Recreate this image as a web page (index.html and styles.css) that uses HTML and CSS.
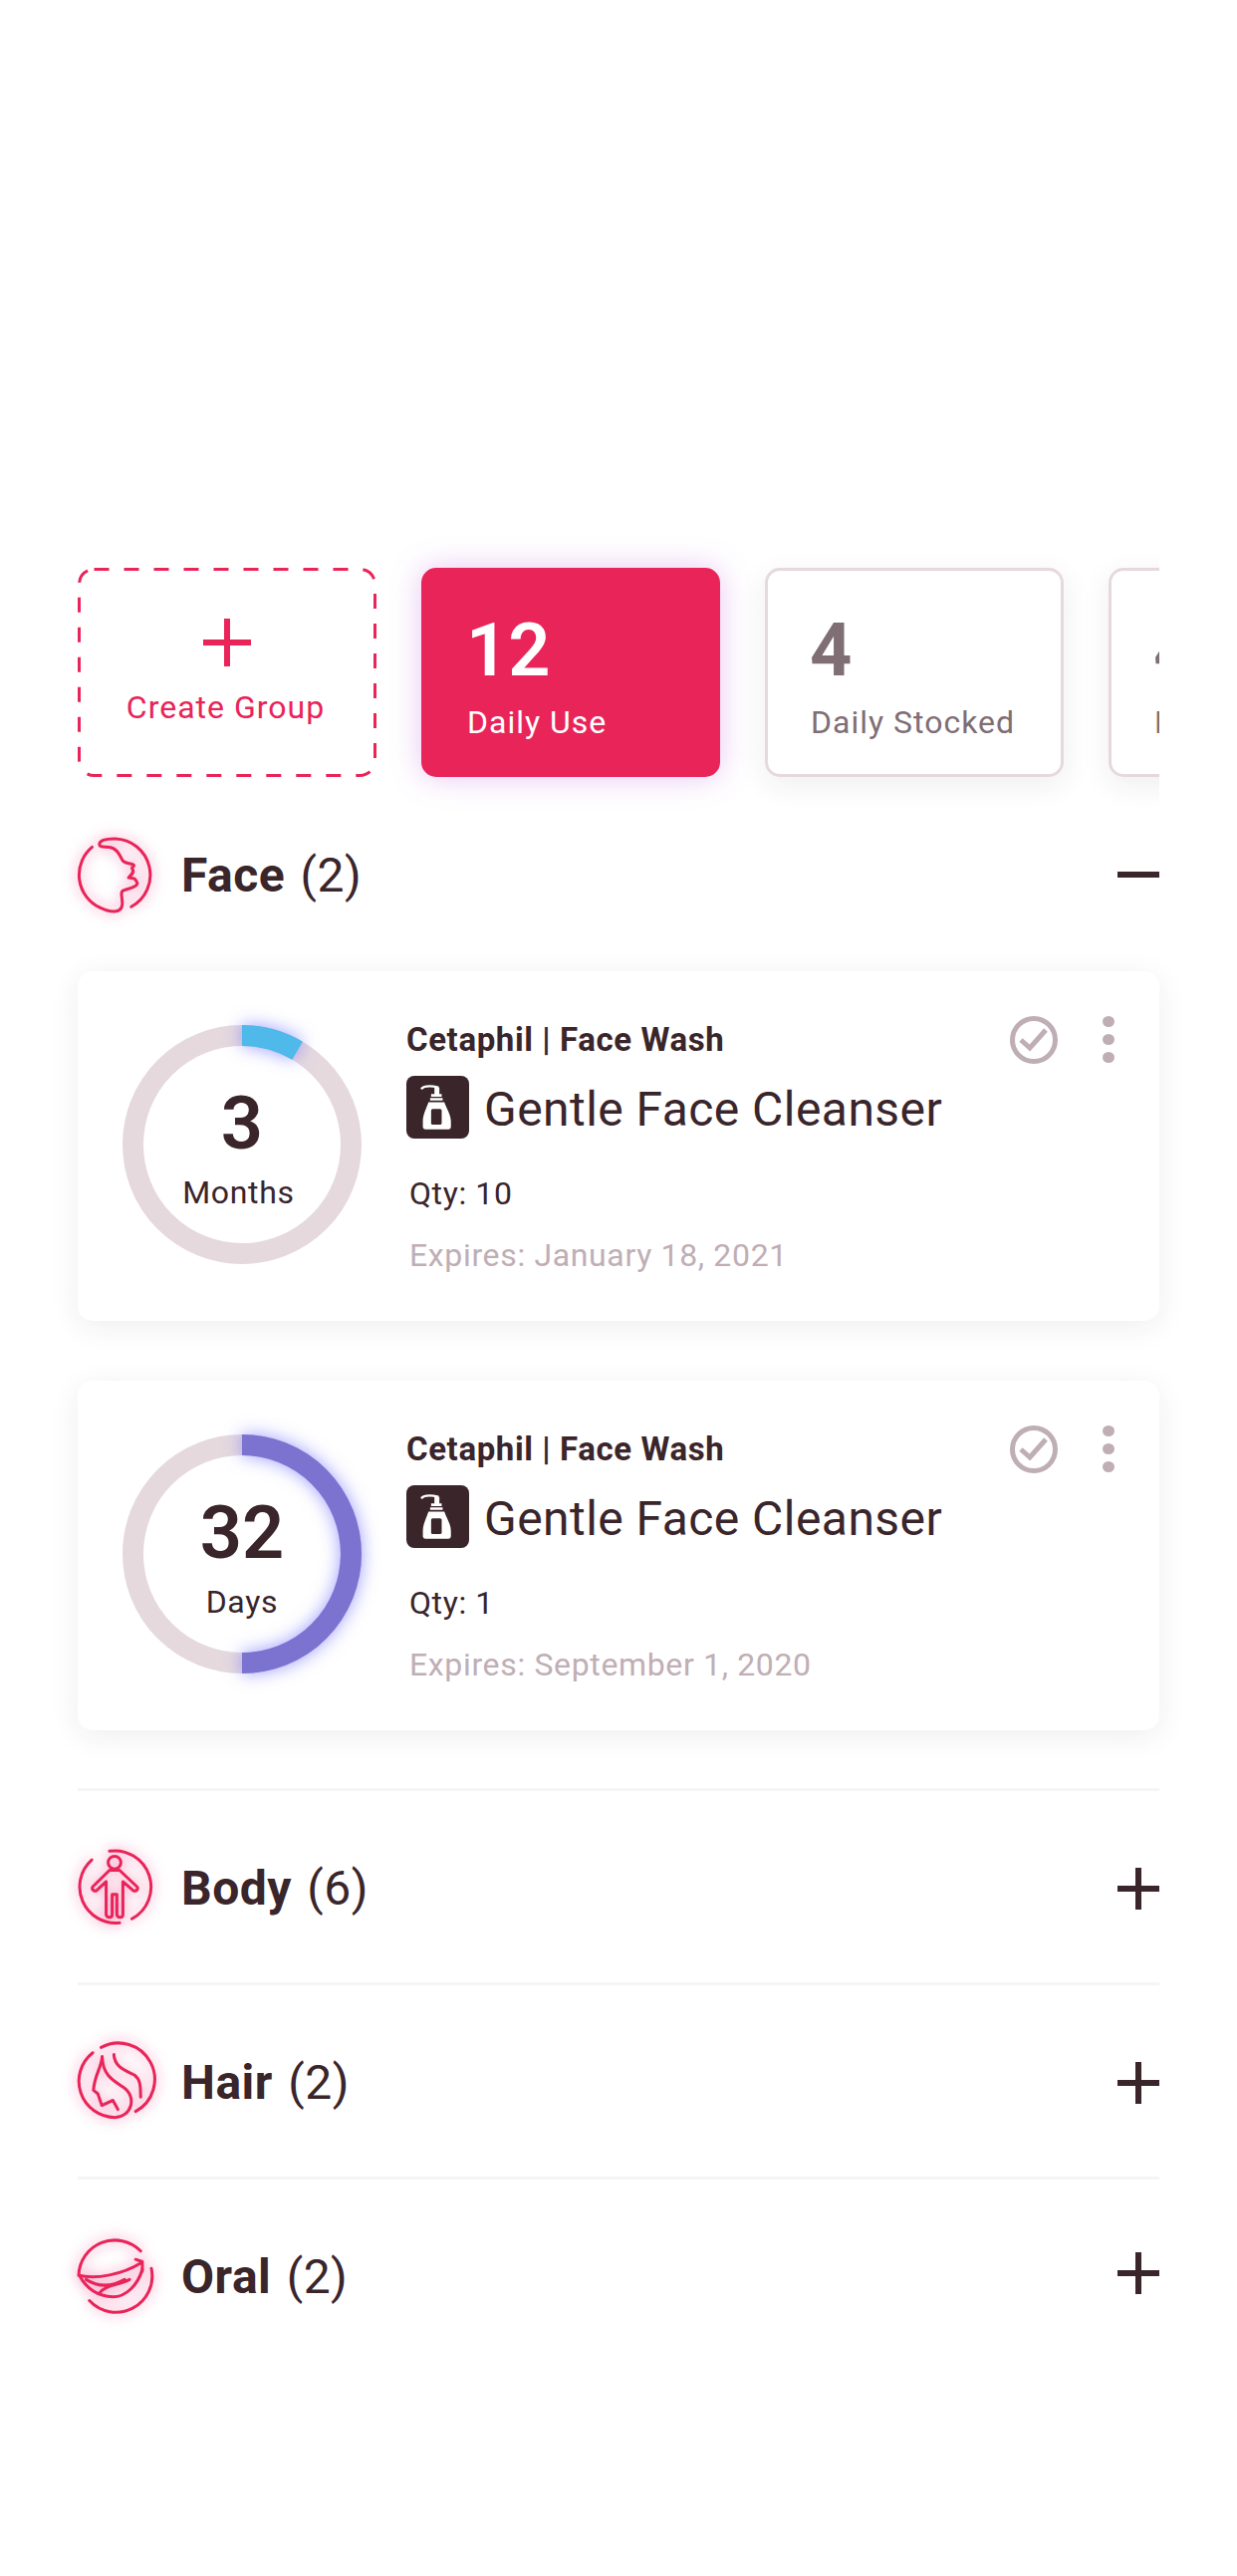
FILE: index.html
```html
<!DOCTYPE html>
<html lang="en">
<head>
    <meta charset="UTF-8">
    <meta name="viewport" content="width=device-width, initial-scale=1.0">
    <title>Routine</title>
    <link rel="stylesheet" href="styles.css">
</head>
<body>
    <div class="page">
        <div class="tiles">
            <div class="tile tile-create">
                <svg class="tile-dash" width="300" height="210"><rect x="1.5" y="1.5" width="297" height="207" rx="15" stroke-dasharray="15 15"/></svg>
                <svg class="tile-plus" width="48" height="48" viewBox="0 0 48 48"><path d="M21 0h6v21h21v6H27v21h-6V27H0v-6h21z"/></svg>
                <span class="tile-create-label">Create Group</span>
            </div>
            <div class="tile tile-active">
                <span class="tile-num">12</span>
                <span class="tile-label">Daily Use</span>
            </div>
            <div class="tile">
                <span class="tile-num">4</span>
                <span class="tile-label">Daily Stocked</span>
            </div>
            <div class="tile">
                <span class="tile-num">4</span>
                <span class="tile-label">Daily Out</span>
            </div>
        </div>

        <div class="group-head group-head-open">
            <svg class="group-icon" viewBox="55 62 223 223">
                <path d="M98 90A108 108 0 0 0 120 270C150 285 185 290 188 262C190 240 178 222 195 218C215 212 238 205 232 195C228 188 228 186 224 184L207 181C215 172 226 165 218 155C214 146 226 150 222 143C205 135 195 140 188 128C180 112 170 92 150 90C135 88 118 92 120 80C122 68 145 65 166 65A108 108 0 0 1 215 268"/>
            </svg>
            <div class="group-name"><b>Face</b> (2)</div>
            <svg class="group-toggle" viewBox="0 0 42 42"><path d="M0 18h42v6H0z"/></svg>
        </div>

        <div class="card">
            <div class="ring">
                <svg width="240" height="240" viewBox="0 0 240 240">
                    <circle class="ring-track" cx="120" cy="120" r="109.5"/>
                    <circle class="ring-arc ring-arc-blue" cx="120" cy="120" r="109.5" pathLength="100" stroke-dasharray="8.5 100"/>
                </svg>
                <div class="ring-text">
                    <span class="ring-num">3</span>
                    <span class="ring-unit ring-unit-months">Months</span>
                </div>
            </div>
            <div class="card-body">
                <div class="brand-row">
                    <span class="brand">Cetaphil | Face Wash</span>
                    <div class="actions">
                        <svg class="check" width="48" height="48" viewBox="0 0 48 48"><circle cx="24" cy="24" r="21.5"/><path d="M11 24l9 8 16-18"/></svg>
                        <div class="dots"><i></i><i></i><i></i></div>
                    </div>
                </div>
                <div class="title-row">
                    <svg class="bottle" viewBox="25 30 190 190">
                        <rect x="25" y="30" width="190" height="190" rx="24" fill="#3a252b"/>
                        <path fill="none" stroke="#fff" stroke-width="7" d="M70 70C80 58 100 60 122 65"/>
                        <path fill="#fff" d="M110 65h15v20h-15zM100 85h32v8h-32zM97 97h38v8H97zM92 110h48c6 18 20 38 20 58v16c0 5-3 8-8 8H83c-5 0-8-3-8-8v-16c0-20 11-40 17-58z"/>
                        <rect x="100" y="130" width="32" height="48" rx="5" fill="#3a252b"/>
                    </svg>
                    <span class="title">Gentle Face Cleanser</span>
                </div>
                <div class="qty">Qty: 10</div>
                <div class="expires">Expires: January 18, 2021</div>
            </div>
        </div>

        <div class="card">
            <div class="ring">
                <svg width="240" height="240" viewBox="0 0 240 240">
                    <circle class="ring-track" cx="120" cy="120" r="109.5"/>
                    <circle class="ring-arc ring-arc-purple" cx="120" cy="120" r="109.5" pathLength="100" stroke-dasharray="50 100"/>
                </svg>
                <div class="ring-text">
                    <span class="ring-num">32</span>
                    <span class="ring-unit">Days</span>
                </div>
            </div>
            <div class="card-body">
                <div class="brand-row">
                    <span class="brand">Cetaphil | Face Wash</span>
                    <div class="actions">
                        <svg class="check" width="48" height="48" viewBox="0 0 48 48"><circle cx="24" cy="24" r="21.5"/><path d="M11 24l9 8 16-18"/></svg>
                        <div class="dots"><i></i><i></i><i></i></div>
                    </div>
                </div>
                <div class="title-row">
                    <svg class="bottle" viewBox="25 30 190 190">
                        <rect x="25" y="30" width="190" height="190" rx="24" fill="#3a252b"/>
                        <path fill="none" stroke="#fff" stroke-width="7" d="M70 70C80 58 100 60 122 65"/>
                        <path fill="#fff" d="M110 65h15v20h-15zM100 85h32v8h-32zM97 97h38v8H97zM92 110h48c6 18 20 38 20 58v16c0 5-3 8-8 8H83c-5 0-8-3-8-8v-16c0-20 11-40 17-58z"/>
                        <rect x="100" y="130" width="32" height="48" rx="5" fill="#3a252b"/>
                    </svg>
                    <span class="title">Gentle Face Cleanser</span>
                </div>
                <div class="qty">Qty: 1</div>
                <div class="expires">Expires: September 1, 2020</div>
            </div>
        </div>

        <div class="group-head group-head-line group-head-first">
            <svg class="group-icon" viewBox="55 232 223 223">
                <path d="M150 236A108 108 0 0 1 217 438M180 450A108 108 0 0 1 97 262"/>
                <circle cx="165" cy="270" r="19"/>
                <path d="M150 293L100 342C95 350 105 358 112 353L140 327V425C142 436 158 436 158 425V365H172V425C174 436 190 436 190 425V327L220 353C228 358 238 350 232 342L180 293Z"/>
            </svg>
            <div class="group-name"><b>Body</b> (6)</div>
            <svg class="group-toggle" viewBox="0 0 42 42"><path d="M18 0h6v18h18v6H24v18h-6V24H0v-6h18z"/></svg>
        </div>

        <div class="group-head group-head-line">
            <svg class="group-icon" viewBox="55 37 223 223">
                <path d="M100 63A108 108 0 0 0 166 256C215 255 235 195 190 165C160 145 130 130 128 75"/>
                <path d="M228 238A108 108 0 1 0 125 47"/>
                <path d="M128 75C125 110 105 130 102 175L115 185L127 220L160 205L175 232"/>
                <path d="M163 68C165 110 205 118 225 130C245 145 242 170 243 195"/>
            </svg>
            <div class="group-name"><b>Hair</b> (2)</div>
            <svg class="group-toggle" viewBox="0 0 42 42"><path d="M18 0h6v18h18v6H24v18h-6V24H0v-6h18z"/></svg>
        </div>

        <div class="group-head group-head-line">
            <svg class="group-icon" viewBox="55 622 223 223">
                <path d="M243 660A108 108 0 0 0 58 733C110 745 190 730 245 695M228 685L248 692L248 720"/>
                <path d="M60 733C80 770 110 795 160 797C200 797 235 760 248 715"/>
                <path d="M80 745C120 770 160 765 195 745M120 785C140 760 170 765 210 745"/>
                <path d="M275 712A108 108 0 0 1 90 808"/>
            </svg>
            <div class="group-name"><b>Oral</b> (2)</div>
            <svg class="group-toggle group-toggle-up" viewBox="0 0 42 42"><path d="M18 0h6v18h18v6H24v18h-6V24H0v-6h18z"/></svg>
        </div>
    </div>
</body>
</html>
```

FILE: styles.css
```css
body {
    font-family: Roboto, 'Noto Sans', sans-serif;
    background-color: #fff;
    color: #3a252b;
    margin: 0;
    padding: 0;
}
.page {
    padding: 530px 78px 0;
}

/* tiles */
.tiles {
    display: flex;
    gap: 45px;
    overflow: hidden;
    padding: 40px 0;
    margin-bottom: -39px;
}
.tile {
    flex: 0 0 300px;
    height: 210px;
    box-sizing: border-box;
    border: 3px solid #e5d9de;
    border-radius: 15px;
    background-color: #fff;
    box-shadow: 0 8px 30px rgba(58, 37, 43, 0.08);
    padding: 0 0 0 42px;
    display: flex;
    flex-direction: column;
    color: #7f6e74;
}
.tile-num {
    font-size: 74px;
    font-weight: 700;
    line-height: 88px;
    margin-top: 36px;
}
.tile-label {
    font-size: 32px;
    line-height: 38px;
    margin: 9px 0 0 1px;
    letter-spacing: 1px;
    white-space: nowrap;
}
.tile-active {
    background-color: #e92459;
    border-color: #e92459;
    color: #fff;
    box-shadow: 0 0 30px rgba(190, 90, 220, 0.35);
}
.tile-active .tile-num {
    font-weight: 600;
}
.tile-create {
    position: relative;
    border: none;
    box-shadow: none;
    padding: 0;
    align-items: center;
    color: #e92459;
}
.tile-dash {
    position: absolute;
    top: 0;
    left: 0;
}
.tile-dash rect {
    fill: none;
    stroke: #e92459;
    stroke-width: 3;
}
.tile-plus {
    fill: #e92459;
    margin-top: 51px;
}
.tile-create-label {
    font-size: 32px;
    line-height: 38px;
    margin: 22px 3px 0 0;
    letter-spacing: 1px;
}

/* group headers */
.group-head {
    height: 195px;
    box-sizing: border-box;
    display: flex;
    align-items: center;
}
.group-head-open {
    height: 194px;
}
.group-head-line {
    border-top: 3px solid #f7f4f5;
}
.group-head-line .group-name {
    padding-top: 3px;
}
.group-head-first {
    margin-top: -2px;
}
.group-icon {
    width: 75px;
    height: 75px;
    fill: none;
    stroke: #e92459;
    stroke-width: 9;
    stroke-linecap: round;
    stroke-linejoin: round;
    overflow: visible;
    filter: drop-shadow(0 0 7px rgba(233, 36, 120, 0.6));
}
.group-name {
    flex: 1;
    margin-left: 29px;
    font-size: 48px;
    font-weight: 400;
    letter-spacing: 0.5px;
}
.group-name b {
    font-weight: 700;
    margin-right: 3px;
}
.group-toggle {
    width: 42px;
    height: 42px;
    fill: #3a252b;
    margin-top: 4px;
}
.group-head-open .group-toggle {
    margin-top: 0;
}
.group-toggle-up {
    margin-top: 0;
    margin-bottom: 4px;
}

/* product cards */
.card {
    display: flex;
    height: 351px;
    box-sizing: border-box;
    padding: 45px 45px 0;
    margin-bottom: 60px;
    background-color: #fff;
    border-radius: 15px;
    box-shadow: 0 6px 30px rgba(58, 37, 43, 0.08);
}
.ring {
    flex: 0 0 240px;
    height: 240px;
    margin-top: 9px;
    display: grid;
}
.ring svg {
    grid-area: 1 / 1;
    overflow: visible;
}
.ring-track {
    fill: none;
    stroke: #e5d9de;
    stroke-width: 21;
}
.ring-arc {
    fill: none;
    stroke-width: 21;
    transform: rotate(-90deg);
    transform-origin: 120px 120px;
}
.ring-arc-blue {
    stroke: #4fb9ea;
    filter: drop-shadow(0 0 9px rgba(90, 90, 255, 0.6));
}
.ring-arc-purple {
    stroke: #7c73d1;
    filter: drop-shadow(0 0 9px rgba(90, 90, 255, 0.6));
}
.ring-text {
    grid-area: 1 / 1;
    display: flex;
    flex-direction: column;
    align-items: center;
    justify-content: center;
}
.ring-num {
    font-size: 74px;
    font-weight: 600;
    line-height: 88px;
    margin-top: 2px;
}
.ring-unit {
    font-size: 32px;
    line-height: 38px;
    margin-top: 6px;
    letter-spacing: 0.7px;
}
.ring-unit-months {
    margin-left: -7px;
}
.card-body {
    flex: 1;
    margin-left: 45px;
}
.brand-row {
    display: flex;
    justify-content: space-between;
    align-items: center;
    height: 48px;
}
.brand {
    font-size: 33px;
    font-weight: 700;
    letter-spacing: 0.6px;
    padding-bottom: 2px;
}
.actions {
    display: flex;
    gap: 45px;
}
.check circle, .check path {
    fill: none;
    stroke: #bfaeb5;
    stroke-width: 5;
}
.dots {
    display: flex;
    flex-direction: column;
    gap: 7px;
}
.dots i {
    display: block;
    width: 12px;
    height: 11px;
    border-radius: 50%;
    background-color: #bfaeb5;
}
.title-row {
    display: flex;
    align-items: center;
    gap: 15px;
    margin-top: 12px;
}
.bottle {
    width: 63px;
    height: 63px;
}
.title {
    font-size: 48px;
    letter-spacing: 0.45px;
    padding-top: 4px;
}
.qty {
    font-size: 32px;
    line-height: 38px;
    margin: 36px 0 0 3px;
    letter-spacing: 0.6px;
}
.expires {
    font-size: 32px;
    line-height: 38px;
    margin: 24px 0 0 3px;
    color: #c0aeb5;
    letter-spacing: 0.65px;
}
```
